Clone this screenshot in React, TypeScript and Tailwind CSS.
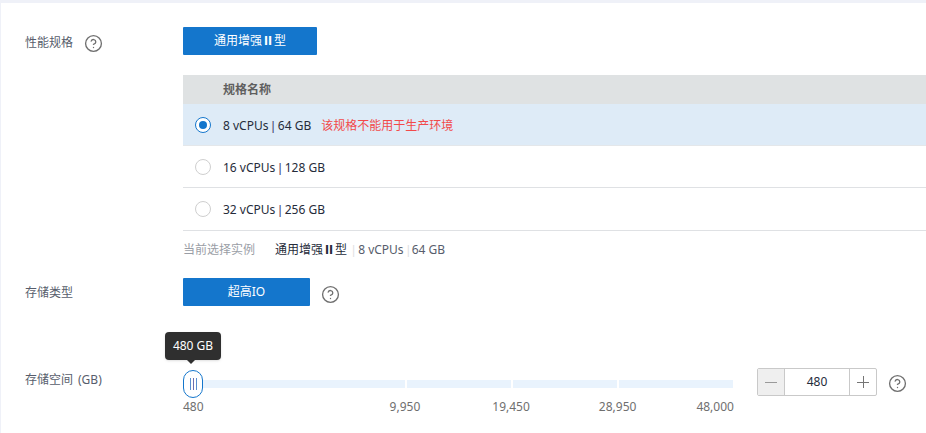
import { CircleHelp } from 'lucide-react';

const FONT = "font-['Noto_Sans','Noto_Sans_CJK_SC',sans-serif]";
const NUMERAL = "font-['DejaVu_Sans',sans-serif] inline-block w-[12px] text-center scale-x-[1.7]";
const PIPE = "font-['Liberation_Sans',sans-serif]";

const specs = [
  { id: '1', name: '8 vCPUs', mem: '64 GB', note: '该规格不能用于生产环境', selected: true },
  { id: '2', name: '16 vCPUs', mem: '128 GB', selected: false },
  { id: '3', name: '32 vCPUs', mem: '256 GB', selected: false },
];

function Help() {
  return <CircleHelp className="w-[19px] h-[19px] text-[#6f6f6f]" strokeWidth={1.7} />;
}

function SpecRow({ spec, last }: { spec: (typeof specs)[number]; last: boolean }) {
  return (
    <div className={`flex items-center ${last ? 'h-[43px]' : 'h-[42px]'} pl-[12px] border-b ${spec.selected ? 'bg-[#deebf7] border-[#e4e7ea]' : 'border-[#dfe1e4]'}`}>
      {spec.selected ? (
        <span className="w-4 h-4 rounded-full border border-[#1476cc] bg-white flex items-center justify-center">
          <span className="w-2 h-2 rounded-full bg-[#1476cc]" />
        </span>
      ) : (
        <span className="w-4 h-4 rounded-full border border-[#cfcfcf] bg-white" />
      )}
      <span className="ml-[12px] mt-[2px] text-[12px] text-[#252b3a]">
        {spec.name} <span className={`${PIPE} text-[#3d3a6e]`}>|</span> {spec.mem}
      </span>
      {spec.note && <span className="ml-[10px] mt-[2px] text-[12px] text-[#f24a4a]">{spec.note}</span>}
    </div>
  );
}

export default function App() {
  return (
    <div className={`${FONT} w-[926px] h-[433px] overflow-hidden bg-[#eff1f8] pt-[3px] pl-px`}>
      <div className="bg-white h-full pt-[24px]">
        {/* performance spec */}
        <div className="flex">
          <div className="w-[182px] pl-[24px] h-[28px] flex items-center text-[12px] text-[#575d6c]">
            <span className="mt-[3px]">性能规格</span>
            <span className="ml-[11px] mt-[4px]"><Help /></span>
          </div>
          <div className="flex-1">
            <button className="w-[134px] h-[28px] rounded-[1px] bg-[#1476cc] text-white text-[12px]">
              通用增强<span className={NUMERAL}>Ⅱ</span>型
            </button>
            <div className="mt-[20px]">
              <div className="h-[29px] bg-[#dfe2e3] flex items-center pl-[40px] text-[12px] font-bold text-[#5f5f5f]">规格名称</div>
              {specs.map((s, i) => <SpecRow key={s.id} spec={s} last={i === specs.length - 1} />)}
            </div>
            <div className="h-[38px] flex items-center text-[12px]">
              <span className="text-[#9a9ea6]">当前选择实例</span>
              <span className="ml-[20px] text-[#252b3a]">通用增强<span className={NUMERAL}>Ⅱ</span>型</span>
              <span className={`${PIPE} ml-[5px] mr-[3px] text-[#dfe1e4]`}>|</span>
              <span className="text-[#575d6c]">8 vCPUs</span>
              <span className={`${PIPE} ml-[3px] mr-[2px] text-[#dfe1e4]`}>|</span>
              <span className="text-[#575d6c]">64 GB</span>
            </div>
          </div>
        </div>

        {/* storage type */}
        <div className="flex mt-[9px]">
          <div className="w-[182px] pl-[24px] h-[28px] flex items-center text-[12px] text-[#575d6c]">
            <span className="mt-[1px]">存储类型</span>
          </div>
          <button className="w-[127px] h-[28px] rounded-[1px] bg-[#1476cc] text-white text-[12px]">超高IO</button>
          <span className="ml-[11px] mt-[7px]"><Help /></span>
        </div>

        {/* storage size */}
        <div className="flex mt-[62px]">
          <div className="w-[182px] pl-[24px] h-[24px] flex items-center text-[12px] text-[#575d6c]">
            存储空间<span className="ml-[5px]">(GB)</span>
          </div>
          <div className="w-[550px] pt-[2px]">
            <div className="relative h-[28px] flex items-center">
              <div className="flex w-full h-[8px] gap-[2px]">
                <div className="w-[222px] bg-[#e9f3fd]" />
                <div className="w-[104px] bg-[#e9f3fd]" />
                <div className="w-[104px] bg-[#e9f3fd]" />
                <div className="flex-1 bg-[#e9f3fd]" />
              </div>
              <div className="absolute left-0 top-0 w-[20px] h-[28px] rounded-[10px] border border-[#1476cc] bg-white flex items-center justify-center gap-[2px]">
                <span className="w-px h-[12px] bg-[#5b8fd0]" />
                <span className="w-px h-[12px] bg-[#6d6fb0]" />
                <span className="w-px h-[12px] bg-[#5b8fd0]" />
              </div>
              <div className="absolute left-[-18px] top-[-38px] w-[56px] h-[28px] rounded-[4px] bg-[#2f2f2f] text-white text-[12px] flex items-center justify-center shadow">
                480 GB
                <span className="absolute left-[21px] bottom-[-4px] w-0 h-0 border-x-[5px] border-x-transparent border-t-[5px] border-t-[#2f2f2f]" />
              </div>
            </div>
            <div className="h-[18px] text-[12px] text-[#6f6f6f] flex">
              <span>480</span>
              <span className="ml-[186px]">9,950</span>
              <span className="ml-[72px]">19,450</span>
              <span className="ml-[69px]">28,950</span>
              <span className="ml-[60px]">48,000</span>
            </div>
          </div>
          <div className="ml-[24px] flex h-[28px] w-[120px] border border-[#c9c9c9] rounded-[2px]">
            <span className="w-[27px] bg-[#efefef] border-r border-[#c9c9c9] flex items-center justify-center">
              <span className="w-[12px] h-px bg-[#9a9a9a]" />
            </span>
            <span className="flex-1 flex items-center justify-center text-[12px] text-[#252b3a]">480</span>
            <span className="w-[27px] border-l border-[#c9c9c9] relative flex items-center justify-center">
              <span className="w-[12px] h-px bg-[#757575]" />
              <span className="absolute w-px h-[12px] bg-[#757575]" />
            </span>
          </div>
          <span className="ml-[11px] mt-[6px]"><Help /></span>
        </div>
      </div>
    </div>
  );
}
